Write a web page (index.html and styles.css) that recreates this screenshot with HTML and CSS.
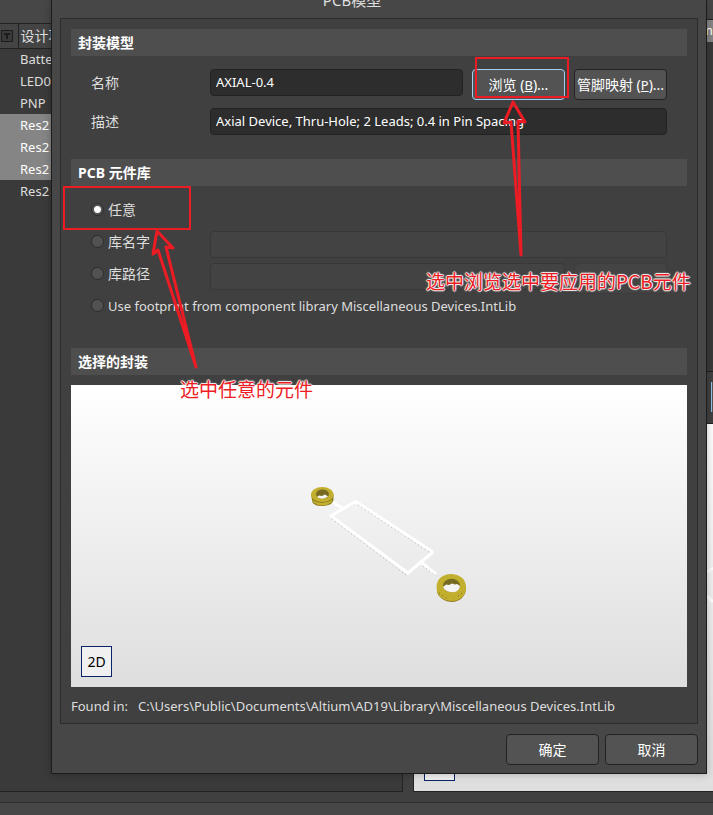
FILE: index.html
```html
<!DOCTYPE html>
<html lang="zh-CN">
<head>
<meta charset="utf-8">
<title>PCB模型</title>
<link rel="stylesheet" href="styles.css">
</head>
<body>
<div class="app">
  <div class="workspace">
    <section class="list-panel">
      <div class="toolbar"></div>
      <table class="parts">
        <thead>
          <tr><th class="type-col"><svg class="type-icon" viewBox="0 0 12 12" width="12" height="12"><rect x=".5" y=".5" width="11" height="11"/><path d="M3 3h6v2H7v4H5V5H3z"/></svg></th><th class="name-col">设计项</th></tr>
        </thead>
        <tbody>
          <tr><td></td><td>Battery</td></tr>
          <tr><td></td><td>LED0</td></tr>
          <tr><td></td><td>PNP</td></tr>
          <tr class="selected"><td></td><td>Res2</td></tr>
          <tr class="selected"><td></td><td>Res2</td></tr>
          <tr class="selected"><td></td><td>Res2</td></tr>
          <tr><td></td><td>Res2</td></tr>
        </tbody>
      </table>
    </section>
    <section class="model-panel">
      <div class="model-bar"></div>
      <div class="model-head">m</div>
      <div class="model-list"></div>
      <div class="model-tools"><span class="model-tool"></span></div>
      <div class="model-view">
        <svg class="model-lines" viewBox="0 0 6 54" width="6" height="54"><path d="M0 6L6 2M0 30L6 36"/></svg>
        <span class="model-mode"></span>
      </div>
    </section>
  </div>
  <footer class="status"></footer>
</div>

<main class="dialog" role="dialog" aria-labelledby="dialog-title">
  <h1 class="dialog-title" id="dialog-title">PCB模型</h1>
  <form class="dialog-form">
    <div class="frame">
      <h2 class="section-title">封装模型</h2>
      <div class="fields model-fields">
        <div class="row">
          <label class="label" for="name">名称</label>
          <input class="text" id="name" type="text" value="AXIAL-0.4">
          <button class="button focused" type="button">浏览 (<u>B</u>)...</button>
          <button class="button" type="button">管脚映射 (<u>P</u>)...</button>
        </div>
        <div class="row">
          <label class="label" for="desc">描述</label>
          <input class="text" id="desc" type="text" value="Axial Device, Thru-Hole; 2 Leads; 0.4 in Pin Spacing">
        </div>
      </div>

      <h2 class="section-title">PCB 元件库</h2>
      <div class="fields library-fields">
        <div class="row">
          <label class="choice"><input type="radio" name="library" checked>任意</label>
        </div>
        <div class="row">
          <label class="choice"><input type="radio" name="library">库名字</label>
          <input class="text" type="text" aria-label="库名字" disabled>
        </div>
        <div class="row">
          <label class="choice"><input type="radio" name="library">库路径</label>
          <input class="text" type="text" aria-label="库路径" disabled>
          <button class="button" type="button" aria-label="库路径" disabled></button>
        </div>
        <div class="row">
          <label class="choice wide"><input type="radio" name="library">Use footprint from component library Miscellaneous Devices.IntLib</label>
        </div>
      </div>

      <h2 class="section-title">选择的封装</h2>
      <div class="preview">
        <svg class="footprint" viewBox="0 0 160 124" width="160" height="124">
          <path class="trace" d="M21 21L32 28M46 21L21 36L98 93L123 72M45 21L123 72M112 83L126 94"/>
          <path class="trace-edge" d="M48 25L119 72M22 39L96 95M113 86L126 96"/>
          <path class="pad-side" d="M1 14H23.500V19C23.500 24 18 26 12 26S2 24 2 20Z"/>
          <ellipse class="pad-top" cx="12.250" cy="14.500" rx="11.250" ry="7.500"/>
          <path class="pad-top" d="M2 20Q12 26 22 20V22Q12 29 3 22Z"/>
          <path class="pad-side" d="M127 106H156V110C155 117 149 122 142 122S128 117 127 112Z"/>
          <path class="pad-top" d="M126.500 107C126.500 99 133 94 141 94S156 99 156 107V110C154 117 149 121 142 121S128 117 127 111Z"/>
          <ellipse class="pad-wall" cx="12.500" cy="14" rx="6.500" ry="4.500"/>
          <path class="pad-hole" d="M7 17L9 15.500L12 16L15 14.500L18 16.500Q13 20.500 7 17Z"/>
          <ellipse class="pad-wall" cx="141.500" cy="105.500" rx="8.500" ry="6.800"/>
          <path class="pad-hole" d="M133 107L136 104.500L139 105L142 103.500L145 104.500L147 104L150 106Q149 112.300 142 112.300Q135 112 133 107Z"/>
          <path class="pad-marks" d="M129 113l4 3l6 3M148 116l6-4"/>
        </svg>
        <button class="mode" type="button">2D</button>
      </div>
      <p class="found"><span>Found in:</span><span>C:\Users\Public\Documents\Altium\AD19\Library\Miscellaneous Devices.IntLib</span></p>
    </div>
    <div class="actions">
      <button class="button" type="button">确定</button>
      <button class="button" type="button">取消</button>
    </div>
  </form>
</main>

<svg class="marks" viewBox="0 0 713 815" width="713" height="815">
  <rect x="476" y="58" width="92" height="39"/>
  <rect x="64" y="187" width="126" height="42"/>
  <path class="arrow" d="M521 255L511 122L504 123L513 102L525 122L518 121Z"/>
  <path class="arrow" d="M196 367L158 250L153 254L157 231L173 248L166 247Z"/>
</svg>
<p class="note note-browse">选中浏览选中要应用的PCB元件</p>
<p class="note note-any">选中任意的元件</p>
</body>
</html>
```
FILE: styles.css
```css
* { box-sizing: border-box; }

body {
  position: relative;
  margin: 0;
  min-height: 100vh;
  overflow: hidden;
  background: #404040;
  color: #dedede;
  font: 13px/20px "Noto Sans", "Noto Sans CJK SC", sans-serif;
}

h1, h2, p { margin: 0; }

/* Main window behind the dialog */
.app { display: flex; flex-direction: column; height: 100vh; }
.workspace { display: flex; flex: 1; gap: 10px; padding-bottom: 10px; }
.status { height: 13px; border-top: 1px solid #2e2e2e; background: #474747; }

.list-panel {
  flex: 0 0 403px;
  border-right: 1px solid #222;
  border-bottom: 1px solid #222;
  background: #3a3a3a;
}
.toolbar { height: 24px; border-bottom: 1px solid #222; background: #474747; }
.parts { width: 100%; border-collapse: collapse; table-layout: fixed; text-align: left; }
.parts th {
  height: 24px;
  padding: 0;
  border-bottom: 1px solid #222;
  background: #444;
  font-size: 14px;
  font-weight: 400;
}
.parts .type-col { width: 18px; }
.parts .name-col { border-left: 1px solid #222; padding-left: 2px; }
.type-icon { display: block; margin-left: 1px; fill: #1c1c1c; }
.type-icon rect { fill: #3a3a3a; stroke: #1c1c1c; }
.parts td { height: 22px; padding: 0 2px; }
.parts .selected { background: #858585; color: #fff; }

.model-panel { display: flex; flex: 1; flex-direction: column; border-left: 1px solid #222; border-bottom: 1px solid #222; }
.model-bar { height: 20px; background: #474747; border-bottom: 1px solid #222; }
.model-head { height: 22px; background: #858585; color: #fff; text-align: right; }
.model-list { height: 330px; background: #3a3a3a; border-bottom: 1px solid #222; }
.model-tools { display: flex; justify-content: flex-end; height: 52px; padding-top: 10px; border-bottom: 1px solid #222; }
.model-tool { width: 2px; height: 30px; border-left: 1px solid #8fc4ee; background: #555; }
.model-view {
  display: flex;
  flex: 1;
  flex-direction: column;
  align-items: flex-end;
  justify-content: space-between;
  padding: 142px 0 10px;
  background: linear-gradient(#fff, #dedede);
}
.model-lines { fill: none; stroke: #fff; stroke-width: 3; }
.model-mode { align-self: flex-start; width: 31px; height: 31px; margin-left: 10px; border: 1px solid #0a246a; background: #f0f0f0; }

/* Dialog */
.dialog {
  position: absolute;
  top: 0;
  left: 51px;
  right: 6px;
  padding: 0 8px 8px;
  border: 1px solid #1c1c1c;
  border-top: 0;
  background: #474747;
  box-shadow: 0 0 8px rgba(0, 0, 0, .25);
}
.dialog-title {
  height: 18px;
  margin: 0 54px 0 0;
  font-size: 15px;
  font-weight: 400;
  line-height: 0;
  text-align: center;
}
.frame { padding: 10px; border: 1px solid #2c2c2c; background: #404040; }
.section-title {
  height: 27px;
  padding-left: 7px;
  background: #4e4e4e;
  color: #fff;
  font-size: 14px;
  font-weight: 700;
  line-height: 27px;
}
.fields { display: flex; flex-direction: column; padding: 0 20px; }
.model-fields { gap: 8px; padding-top: 13px; padding-bottom: 24px; }
.library-fields { padding-top: 8px; padding-bottom: 26px; }
.row { display: flex; align-items: flex-start; gap: 9px; }
.library-fields .row { height: 32px; padding-top: 5px; }

.label { flex: 0 0 110px; font-size: 14px; line-height: 27px; }
.choice { display: flex; flex: 0 0 110px; align-items: center; gap: 4px; height: 22px; font-size: 14px; }
.choice.wide { flex: 1; font-size: 13px; }
.choice input {
  appearance: none;
  width: 13px;
  height: 13px;
  margin: 0 0 2px;
  border: 1px solid #2c2c2c;
  border-radius: 50%;
  background: #525252;
}
.choice input:checked { background: radial-gradient(circle, #fff 3px, #525252 4px); }

.text {
  flex: 1;
  min-width: 0;
  height: 27px;
  padding: 0 5px 1px;
  border: 1px solid #222;
  border-radius: 4px;
  background: #2d2d2d;
  color: #fff;
  font: inherit;
}
.text:disabled { border-color: #383838; background: #434343; }

.button {
  flex: 0 0 93px;
  height: 31px;
  padding: 0 0 2px;
  border: 1px solid #222;
  border-radius: 4px;
  background: #535353;
  color: #fff;
  font-family: inherit;
  font-size: 14px;
  white-space: nowrap;
}
.row .button u { font-size: 13px; }
.button.focused { border-color: #a4d0f4; }
.button:disabled { border-color: #3c3c3c; background: #444; }

.preview {
  display: flex;
  flex-direction: column;
  align-items: center;
  justify-content: space-between;
  height: 302px;
  margin-top: 10px;
  padding: 95px 10px 10px;
  background: linear-gradient(#fff, #dedede);
}
.footprint { margin-left: 22px; }
.trace { fill: none; stroke: #fff; stroke-width: 3; }
.trace-edge { fill: none; stroke: #a9b4ba; stroke-width: 1; stroke-dasharray: 1 3; }
.pad-side { fill: #8e7e20; }
.pad-top { fill: #c3af2e; }
.pad-wall { fill: #766b20; }
.pad-hole { fill: #f4f4f2; }
.pad-marks { fill: none; stroke: #6b5f15; stroke-dasharray: 1 3; }
.mode {
  align-self: flex-start;
  width: 31px;
  height: 31px;
  padding: 0;
  border: 1px solid #0a246a;
  background: #f0f0f0;
  color: #000;
  font-family: inherit;
  font-size: 14px;
}
.found { display: flex; gap: 10px; padding-top: 12px; line-height: 14px; }
.actions { display: flex; justify-content: flex-end; gap: 6px; padding-top: 10px; }

/* Markup drawn over the window */
.marks { position: absolute; top: 0; left: 0; fill: none; stroke: #ed1c24; stroke-width: 2; pointer-events: none; }
.arrow { stroke-width: 3; stroke-linejoin: round; }
.note {
  position: absolute;
  color: #ed1c24;
  font: 19px/28px "Noto Sans CJK SC", sans-serif;
  white-space: nowrap;
  text-shadow: 1px 0 1px #fff, -1px 0 1px #fff, 0 1px 1px #fff, 0 -1px 1px #fff;
}
.note-browse { top: 267px; left: 426px; }
.note-any { top: 375px; left: 180px; }
```
